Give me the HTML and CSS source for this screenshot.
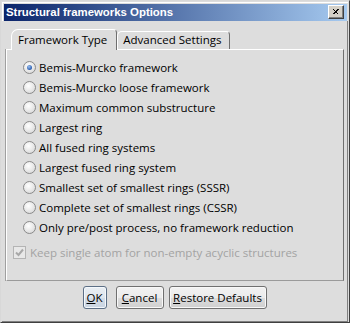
FILE: index.html
```html
<!DOCTYPE html>
<html>
<head>
<meta charset="utf-8">
<link rel="stylesheet" href="styles.css">
</head>
<body>
<div class="window">
  <div class="titlebar">
    <span class="title">Structural frameworks Options</span>
    <span class="close">
      <svg width="16" height="14" viewBox="0 0 16 14">
        <path d="M4.5 3.5 L10.5 9.5 M5.5 3.5 L11.5 9.5 M10.5 3.5 L4.5 9.5 M11.5 3.5 L5.5 9.5" stroke="#000" stroke-width="1" fill="none" shape-rendering="crispEdges"/>
      </svg>
    </span>
  </div>
  <div class="body">
    <div class="tabs">
      <div class="tab active">Framework Type</div>
      <div class="tab">Advanced Settings</div>
    </div>
    <div class="panel">
      <div class="radios">
        <div class="row"><span class="radio on"></span><span>Bemis-Murcko framework</span></div>
        <div class="row"><span class="radio"></span><span>Bemis-Murcko loose framework</span></div>
        <div class="row"><span class="radio"></span><span>Maximum common substructure</span></div>
        <div class="row"><span class="radio"></span><span>Largest ring</span></div>
        <div class="row"><span class="radio"></span><span>All fused ring systems</span></div>
        <div class="row"><span class="radio"></span><span>Largest fused ring system</span></div>
        <div class="row"><span class="radio"></span><span>Smallest set of smallest rings (SSSR)</span></div>
        <div class="row"><span class="radio"></span><span>Complete set of smallest rings (CSSR)</span></div>
        <div class="row"><span class="radio"></span><span>Only pre/post process, no framework reduction</span></div>
      </div>
      <div class="check">
        <span class="box">
          <svg width="11" height="11" viewBox="0 0 11 11"><path d="M2 5.5 L4.5 8 L9 2.5" stroke="#a8a8a8" stroke-width="2" fill="none"/></svg>
        </span>
        <span>Keep single atom for non-empty acyclic structures</span>
      </div>
    </div>
    <div class="buttons">
      <button class="btn ok"><u>O</u>K</button>
      <button class="btn cancel"><u>C</u>ancel</button>
      <button class="btn restore"><u>R</u>estore Defaults</button>
    </div>
  </div>
</div>
</body>
</html>
```

FILE: styles.css
```css
* { box-sizing: border-box; }
html, body { margin: 0; padding: 0; }
body {
  width: 350px;
  height: 323px;
  background: #dddddd;
  font-family: "Open Sans", "Noto Sans", sans-serif;
  font-size: 11px;
  color: #000;
}
.window {
  width: 350px;
  height: 323px;
  border-top: 1px solid #d8d8d8;
  border-left: 1px solid #d8d8d8;
  border-right: 1px solid #404040;
  border-bottom: 1px solid #404040;
  background: #dddddd;
  display: flex;
  flex-direction: column;
}
.window > * { flex: none; }
.titlebar {
  margin: 1px 1px 0 1px;
  border-top: 1px solid #fff;
  border-left: 1px solid #fff;
  height: 19px;
  padding: 1px 1px 0 1px;
  display: flex;
  align-items: stretch;
  background-clip: content-box;
  background-image: linear-gradient(to right, #0a246a, #a6caf0);
}
.title {
  flex: 1;
  color: #fff;
  font-family: "Liberation Sans", sans-serif;
  font-weight: bold;
  font-size: 11.4px;
  line-height: 17px;
  padding-left: 2px;
}
.close {
  width: 16px;
  height: 14px;
  margin: 1px 3px 0 0;
  background: #d4d0c8;
  border-top: 1px solid #fff;
  border-left: 1px solid #fff;
  border-right: 1px solid #404040;
  border-bottom: 1px solid #404040;
  box-shadow: inset -1px -1px 0 #808080;
  display: flex;
}
.close svg { margin: -1px 0 0 -1px; }
.body {
  flex: 1;
  margin: 0 1px 0 1px;
  border-right: 1px solid #808080;
  border-bottom: 1px solid #808080;
  padding: 8px 3px 0 4px;
  display: flex;
  flex-direction: column;
}
.tabs {
  display: flex;
  align-items: flex-end;
  height: 21px;
  padding-left: 5px;
  position: relative;
  z-index: 1;
  margin-bottom: -1px;
}
.tab {
  font-size: 11.5px;
  line-height: 16px;
  height: 18px;
  padding: 0 8px 0 5px;
  border-top: 1px solid #fff;
  border-left: 1px solid #fff;
  border-right: 1px solid #6f6f6f;
  border-radius: 5px 4px 0 0;
  background: #dddddd;
  margin-bottom: 1px;
}
.tab.active {
  height: 21px;
  margin-bottom: 0;
  padding: 1px 9px 0 6px;
  border-radius: 7px 4px 0 0;
  line-height: 18px;
}
.panel {
  height: 232px;
  border-top: 1px solid #fff;
  border-left: 1px solid #fff;
  border-right: 1px solid #6f6f6f;
  border-bottom: 1px solid #9a9a9a;
  box-shadow: -1px 0 0 #a0a0a0;
  padding: 7px 0 0 0;
}
.radios { padding-left: 16px; }
.row {
  height: 20px;
  display: flex;
  align-items: center;
  gap: 3px;
  font-size: 11.5px;
}
.radio {
  width: 13px;
  height: 13px;
  border-radius: 50%;
  border: 1px solid #8a8a8a;
  background: radial-gradient(circle at 40% 35%, #ffffff, #e4e4e4 60%, #cfcfcf);
  display: flex;
  align-items: center;
  justify-content: center;
  flex: none;
}
.radio.on::after {
  content: "";
  width: 5px;
  height: 5px;
  border-radius: 50%;
  background: radial-gradient(circle at 40% 35%, #9cc0ef, #2a5db0 70%);
}
.check {
  margin-top: 5px;
  padding-left: 6px;
  height: 20px;
  display: flex;
  align-items: center;
  gap: 4px;
  color: #a3a3a3;
  font-size: 11.5px;
}
.box {
  width: 13px;
  height: 13px;
  border: 1px solid #b4b4b4;
  background: #e8e8e8;
  display: flex;
  flex: none;
}
.buttons {
  display: flex;
  justify-content: center;
  margin-top: 5px;
  padding-right: 1px;
}
.btn {
  height: 23px;
  font-family: "Open Sans", "Noto Sans", sans-serif;
  font-size: 11.5px;
  color: #000;
  padding: 0;
  border: 1px solid #707070;
  border-radius: 3px;
  background: linear-gradient(#f2f2f2, #ebebeb 50%, #dddddd 51%, #cfcfcf);
  box-shadow: inset 0 0 0 1px #f8f8f8;
}
.btn.ok {
  width: 24px;
  margin-right: 9px;
  border-color: #5c6f86;
  background: linear-gradient(#e9eef3, #dfe6ee 50%, #d3dde8 51%, #c9d4e1);
  box-shadow: inset 0 0 0 1px #f4f8fc;
}
.btn.cancel { width: 48px; margin-right: 5px; }
.btn.restore { width: 98px; }
u { text-decoration: underline; text-underline-offset: 1px; }
```
